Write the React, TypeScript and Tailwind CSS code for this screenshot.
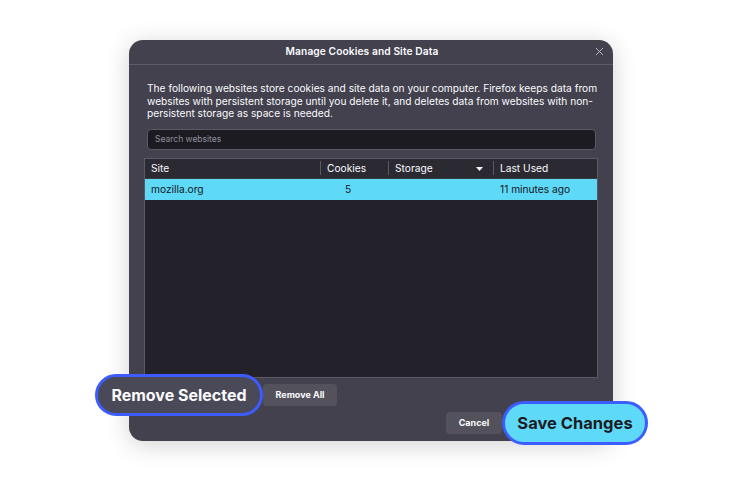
import { X } from "lucide-react";

const COLUMNS = [
  { label: "Site", width: "w-[175px]", sep: false },
  { label: "Cookies", width: "w-[68px]", sep: true },
  { label: "Storage", width: "w-[105px]", sep: true, sort: true },
  { label: "Last Used", width: "flex-1", sep: true },
];

export default function App() {
  return (
    <div
      className="relative w-[750px] h-[482px] bg-white overflow-hidden"
      style={{ fontFamily: "Inter, 'Noto Sans', sans-serif" }}
    >
      {/* dialog */}
      <div className="ml-[129px] mt-[40px] w-[484px] h-[401px] rounded-[14px] bg-[#42414d] shadow-[0_4px_24px_rgba(0,0,0,0.18)] flex flex-col text-[#fbfbfe]">
        {/* title bar */}
        <div className="relative h-[25px] border-b border-[#5d5c66] flex items-center justify-center pr-[18px]">
          <span className="text-[10.2px] font-semibold tracking-[0.01em]">Manage Cookies and Site Data</span>
          <X className="absolute right-[7px] top-[5px] w-[13px] h-[13px] text-[#c9c9d0]" strokeWidth={1.6} />
        </div>

        <div className="flex-1 flex flex-col px-[15px] pt-[17px]">
          <p className="px-[3px] text-[10.2px] leading-[12.5px] whitespace-nowrap">
            The following websites store cookies and site data on your computer. Firefox keeps data from
            <br />
            websites with persistent storage until you delete it, and deletes data from websites with non-
            <br />
            persistent storage as space is needed.
          </p>

          {/* search */}
          <div className="mt-[9px] ml-[3px] mr-[2px] h-[21px] rounded-[4px] bg-[#1c1b22] border border-[#5b5a64] flex items-center px-[7px]">
            <span className="text-[8.5px] text-[#8f8f9d]">Search websites</span>
          </div>

          {/* table */}
          <div className="mt-[8px] h-[220px] border border-[#5b5a64] bg-[#23222b] flex flex-col">
            <div className="h-[20px] bg-[#2b2a33] flex items-center border-b border-[#3a3944]">
              {COLUMNS.map((c) => (
                <div key={c.label} className={`${c.width} h-full flex items-center relative`}>
                  {c.sep && <span className="w-px h-[14px] bg-[#5b5a64]" />}
                  <span className="pl-[6px] pt-[2px] text-[10.2px] text-[#fbfbfe]">{c.label}</span>
                  {c.sort && (
                    <svg className="absolute right-[10px] top-[8px]" width="7" height="4" viewBox="0 0 7 4">
                      <path d="M0 0h7L3.5 4z" fill="#fbfbfe" />
                    </svg>
                  )}
                </div>
              ))}
            </div>
            <div className="h-[21px] pt-[2px] bg-[#5fd9f8] flex items-center text-[10.2px] text-[#15141a]">
              <span className="w-[175px] pl-[6px]">mozilla.org</span>
              <span className="w-[68px] text-center pr-[12px]">5</span>
              <span className="w-[105px]" />
              <span className="flex-1 pl-[7px]">11 minutes ago</span>
            </div>
          </div>

          {/* remove buttons (the first one sits under its callout) */}
          <div className="mt-[6px] flex items-center gap-[5px]">
            <div className="h-[22px] w-[114px] rounded-[4px] bg-[#53525c]" />
            <button className="h-[22px] w-[74px] rounded-[4px] bg-[#53525c] text-[9px] font-bold">Remove All</button>
          </div>

          {/* dialog actions (save sits under its callout) */}
          <div className="mt-[6px] flex items-center justify-end gap-[4px] pr-[2px]">
            <button className="h-[22px] w-[56px] rounded-[4px] bg-[#53525c] text-[9px] font-bold">Cancel</button>
            <div className="h-[22px] w-[90px] rounded-[4px] bg-[#5fd9f8]" />
          </div>
        </div>
      </div>

      {/* enlarged callouts */}
      <div className="absolute left-[95px] top-[374px] w-[168px] h-[42px] rounded-full border-[3px] border-[#3d5cff] bg-[#4a4957] flex items-center justify-center">
        <span className="text-[16px] font-bold text-[#fbfbfe]">Remove Selected</span>
      </div>
      <div className="absolute left-[502px] top-[401px] w-[146px] h-[44px] rounded-full border-[3px] border-[#3d5cff] bg-[#5fd9f8] flex items-center justify-center">
        <span className="text-[16.5px] font-bold text-[#1c1b22]">Save Changes</span>
      </div>
    </div>
  );
}
